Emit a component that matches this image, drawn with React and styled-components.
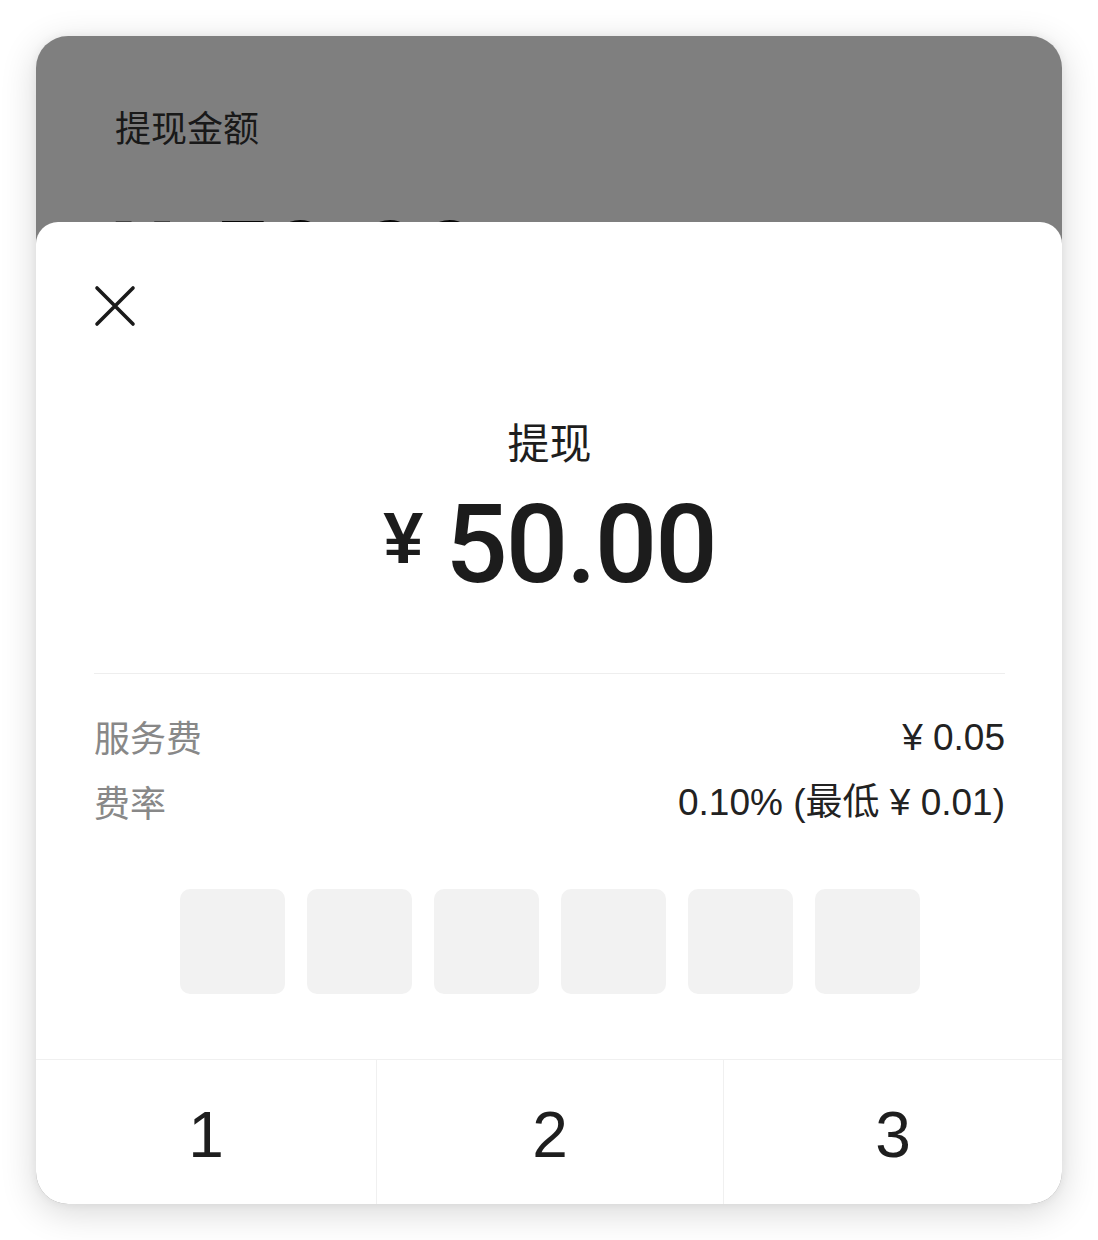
import React from "react";
import styled, { createGlobalStyle } from "styled-components";

const GlobalStyle = createGlobalStyle`
  html, body {
    margin: 0;
    padding: 0;
    background: #ffffff;
  }
  body {
    font-family: "Liberation Sans", "Noto Sans CJK SC", sans-serif;
    color: #222222;
  }
`;

const Stage = styled.div`
  width: 1098px;
  height: 1240px;
  padding: 36px;
  box-sizing: border-box;
`;

const Phone = styled.div`
  position: relative;
  height: 1168px;
  border-radius: 32px;
  overflow: hidden;
  background: #ffffff;
  box-shadow: 0 8px 36px rgba(0, 0, 0, 0.16), 0 0 10px rgba(0, 0, 0, 0.06);
`;

const Page = styled.div`
  padding: 68px 0 0 79px;
`;

const PageLabel = styled.div`
  font-family: "Noto Sans CJK SC", sans-serif;
  font-size: 36px;
  line-height: 44px;
  color: #333333;
`;

const PageAmount = styled.div`
  display: flex;
  align-items: baseline;
  gap: 40px;
  margin-top: 52px;
  font-family: Roboto, "Liberation Sans", sans-serif;
  font-weight: 700;
  font-size: 104px;
  line-height: 120px;
  color: #111111;
`;

const Backdrop = styled.div`
  position: absolute;
  inset: 0;
  background: rgba(0, 0, 0, 0.5);
`;

const Sheet = styled.div`
  position: absolute;
  left: 0;
  right: 0;
  top: 186px;
  bottom: 0;
  background: #ffffff;
  border-radius: 22px 22px 0 0;
  display: flex;
  flex-direction: column;
`;

const Body = styled.div`
  padding: 0 57px 0 58px;
  display: flex;
  flex-direction: column;
`;

const Close = styled.button`
  width: 42px;
  height: 42px;
  margin-top: 63px;
  padding: 0;
  border: 0;
  background: none;
  display: flex;
  svg {
    display: block;
  }
`;

const Title = styled.div`
  margin-top: 84px;
  text-align: center;
  font-family: "Noto Sans CJK SC", sans-serif;
  font-size: 42px;
  font-weight: 400;
  line-height: 60px;
  color: #1e1e1e;
`;

const Amount = styled.div`
  margin-top: 14px;
  height: 120px;
  display: flex;
  justify-content: center;
  align-items: flex-start;
  gap: 22px;
  color: #1c1c1c;
`;

const Yen = styled.span`
  margin-top: 17px;
  font-family: "Liberation Sans", sans-serif;
  font-weight: 700;
  font-size: 72px;
  line-height: 72px;
`;

const Digits = styled.span`
  font-family: Roboto, "Liberation Sans", sans-serif;
  font-weight: 500;
  font-size: 110px;
  line-height: 120px;
  letter-spacing: -2px;
`;

const Divider = styled.div`
  margin-top: 68px;
  height: 1px;
  background: #eeeeee;
`;

const Rows = styled.div`
  margin-top: 31px;
  display: flex;
  flex-direction: column;
`;

const Row = styled.div`
  display: flex;
  justify-content: space-between;
  align-items: center;
  height: 65px;
`;

const Label = styled.span`
  font-family: "Noto Sans CJK SC", sans-serif;
  font-size: 36px;
  line-height: 1;
  margin-top: -4px;
  color: #888888;
`;

const Value = styled.span`
  font-family: "Liberation Sans", "Noto Sans CJK SC", sans-serif;
  font-size: 37px;
  line-height: 1;
  color: #222222;
`;

const Boxes = styled.div`
  margin-top: 54px;
  display: flex;
  justify-content: center;
  gap: 22px;
`;

const Box = styled.div`
  width: 105px;
  height: 105px;
  border-radius: 10px;
  background: #f2f2f2;
`;

const Keypad = styled.div`
  margin-top: 65px;
  display: grid;
  grid-template-columns: 340px 347px 1fr;
  border-top: 1px solid #f0f0f0;
`;

const Key = styled.div`
  height: 150px;
  display: flex;
  align-items: center;
  justify-content: center;
  font-family: "Liberation Sans", sans-serif;
  font-size: 64px;
  color: #1e1e1e;
  border-left: ${(p) => (p.$first ? "none" : "1px solid #f0f0f0")};
`;

const fees = [
  { label: "服务费", value: "¥ 0.05" },
  { label: "费率", value: "0.10% (最低 ¥ 0.01)" },
];

export default function App() {
  return (
    <Stage>
      <GlobalStyle />
      <Phone>
        <Page>
          <PageLabel>提现金额</PageLabel>
          <PageAmount>
            <span>¥</span>
            <span>50.00</span>
          </PageAmount>
        </Page>
        <Backdrop />
        <Sheet>
          <Body>
            <Close aria-label="关闭">
              <svg width="42" height="42" viewBox="0 0 42 42">
                <path
                  d="M3 3 L39 39 M39 3 L3 39"
                  stroke="#1a1a1a"
                  strokeWidth="3.6"
                  strokeLinecap="round"
                  fill="none"
                />
              </svg>
            </Close>
            <Title>提现</Title>
            <Amount>
              <Yen>¥</Yen>
              <Digits>50.00</Digits>
            </Amount>
            <Divider />
            <Rows>
              {fees.map((f) => (
                <Row key={f.label}>
                  <Label>{f.label}</Label>
                  <Value>{f.value}</Value>
                </Row>
              ))}
            </Rows>
            <Boxes>
              {[0, 1, 2, 3, 4, 5].map((i) => (
                <Box key={i} />
              ))}
            </Boxes>
          </Body>
          <Keypad>
            {["1", "2", "3"].map((k, i) => (
              <Key key={k} $first={i === 0}>
                {k}
              </Key>
            ))}
          </Keypad>
        </Sheet>
      </Phone>
    </Stage>
  );
}
